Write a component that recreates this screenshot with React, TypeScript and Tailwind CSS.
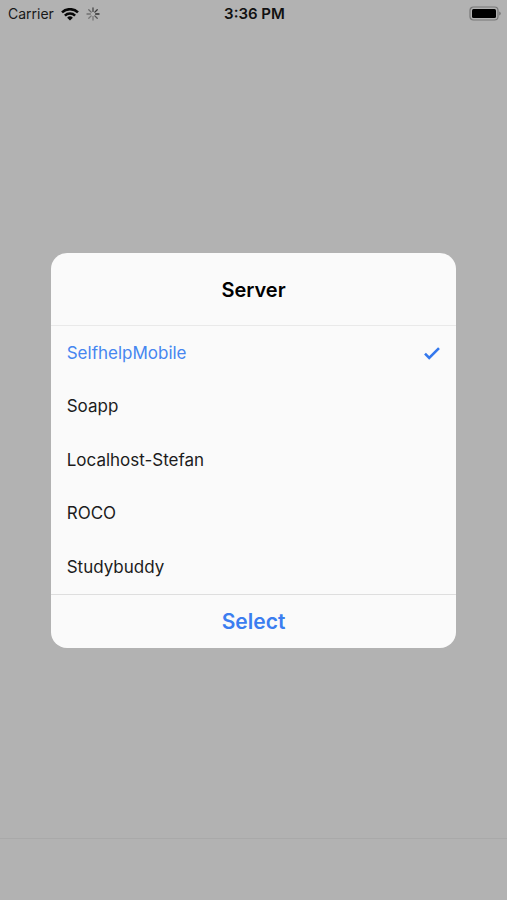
import { useState } from "react";

const servers = ["SelfhelpMobile", "Soapp", "Localhost-Stefan", "ROCO", "Studybuddy"];

const spokes = [
  { angle: 0, opacity: 0.75 },
  { angle: 45, opacity: 0.85 },
  { angle: 90, opacity: 0.9 },
  { angle: 135, opacity: 0.65 },
  { angle: 180, opacity: 0.4 },
  { angle: 225, opacity: 0.4 },
  { angle: 270, opacity: 0.45 },
  { angle: 315, opacity: 0.5 },
];

function WifiIcon() {
  return (
    <svg viewBox="0 0 18 13" className="h-[13px] w-[18px]" aria-hidden="true">
      <g fill="none" stroke="#080808" strokeWidth="2.5">
        <path d="M1 4.4A11.5 11.5 0 0 1 17 4.4" />
        <path d="M3.9 7.6A7.2 7.2 0 0 1 14.1 7.6" />
      </g>
      <path d="M9 12.6L6.1 9.7A4.2 4.2 0 0 1 11.9 9.7Z" fill="#080808" />
    </svg>
  );
}

function ActivityIcon() {
  return (
    <svg viewBox="0 0 14 14" className="h-[14px] w-[14px]" aria-hidden="true">
      {spokes.map(({ angle, opacity }) => (
        <line
          key={angle}
          x1="7"
          y1="1"
          x2="7"
          y2="4.4"
          stroke="#222"
          strokeWidth="1.3"
          strokeLinecap="round"
          opacity={opacity}
          transform={`rotate(${angle} 7 7)`}
        />
      ))}
    </svg>
  );
}

function BatteryIcon() {
  return (
    <svg viewBox="0 0 32 15" className="h-[15px] w-[32px]" aria-hidden="true">
      <rect x="1" y="1" width="28" height="13" rx="3.5" fill="none" stroke="#777" strokeWidth="1.2" />
      <rect x="3" y="3" width="24" height="9" rx="1.5" fill="#000" />
      <path d="M30.2 5.4Q31.8 6 31.8 7.5T30.2 9.6Z" fill="#777" />
    </svg>
  );
}

function CheckIcon() {
  return (
    <svg viewBox="0 0 16 14" className="h-[14px] w-[16px]" aria-hidden="true">
      <path d="M1 7.7L5.2 11.9L15 2.1" fill="none" stroke="#3478ed" strokeWidth="2.6" />
    </svg>
  );
}

export default function App() {
  const [selected, setSelected] = useState(servers[0]);

  return (
    <div className="relative flex min-h-screen flex-col bg-[#b2b2b2] font-['Inter','Liberation_Sans',sans-serif] text-black">
      <header className="grid h-7 grid-cols-3 items-center pr-1.5 pl-2">
        <div className="flex items-center gap-[7px] text-sm text-[#181818]">
          <span>Carrier</span>
          <WifiIcon />
          <ActivityIcon />
        </div>
        <time className="text-center text-[15px] font-semibold text-[#111]">3:36 PM</time>
        <div className="flex justify-end pb-px">
          <BatteryIcon />
        </div>
      </header>
      <main className="flex-1" />
      <footer className="h-[62px] border-t border-[#a9a9a9]" />

      <div className="absolute inset-0 flex items-center justify-center">
        <form
          role="dialog"
          aria-labelledby="server-title"
          onSubmit={(event) => event.preventDefault()}
          className="w-4/5 overflow-hidden rounded-2xl bg-[#fafafa]"
        >
          <h1
            id="server-title"
            className="flex h-[73px] items-center justify-center border-b border-[#e9e9e9] pt-0.5 text-xl font-semibold"
          >
            Server
          </h1>
          <div role="radiogroup" aria-labelledby="server-title" className="flex h-[268px] flex-col">
            {servers.map((server) => (
              <label
                key={server}
                className={`flex flex-1 cursor-pointer items-center justify-between px-4 pt-0.5 text-[17px] ${
                  server === selected ? "text-[#4686f0]" : "text-[#1c1c1c]"
                }`}
              >
                {server}
                <input
                  type="radio"
                  name="server"
                  value={server}
                  checked={server === selected}
                  onChange={() => setSelected(server)}
                  className="sr-only"
                />
                {server === selected && <CheckIcon />}
              </label>
            ))}
          </div>
          <button
            type="submit"
            className="h-[54px] w-full cursor-pointer border-t border-[#dedede] pt-0.5 text-[21px] font-semibold text-[#3b7df0]"
          >
            Select
          </button>
        </form>
      </div>
    </div>
  );
}
